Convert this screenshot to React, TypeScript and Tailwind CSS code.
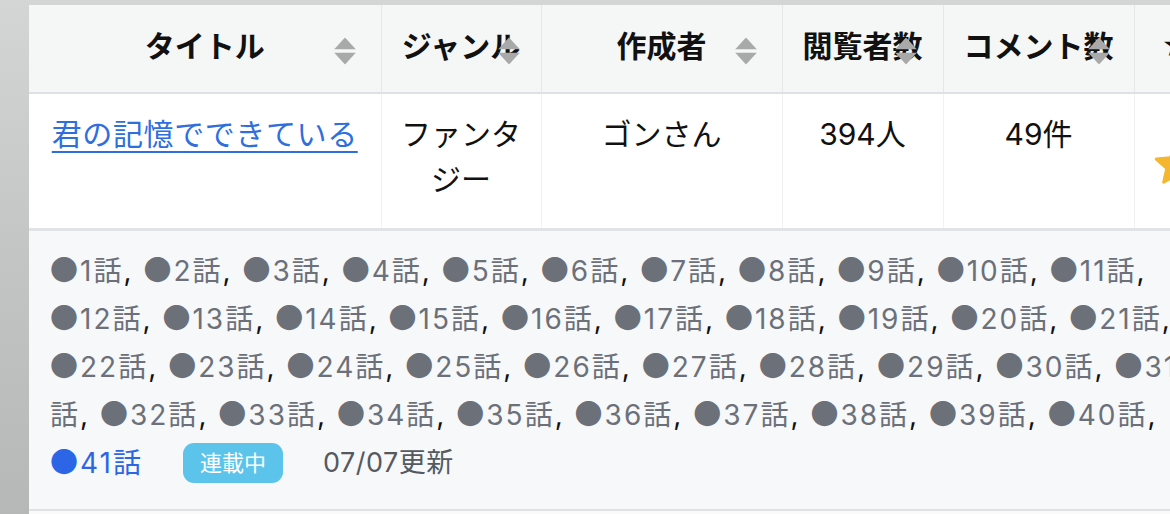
import React from 'react';

const episodes = Array.from({ length: 40 }, (_, i) => i + 1);

function SortIcon({ className }: { className: string }) {
  return (
    <span className={`absolute top-1/2 mt-[2px] -translate-y-1/2 flex flex-col gap-[3px] ${className}`}>
      <svg width="22" height="12" viewBox="0 0 22 12">
        <polygon points="11,0 22,12 0,12" fill="#a9a9a9" />
      </svg>
      <svg width="22" height="12" viewBox="0 0 22 12">
        <polygon points="0,0 22,0 11,12" fill="#a9a9a9" />
      </svg>
    </span>
  );
}

function Star() {
  return (
    <svg width="46" height="44" viewBox="0 0 24 23" className="inline-block">
      <polygon
        points="12,1.5 15,8.3 22.3,8.9 16.8,13.8 18.4,21 12,17.2 5.6,21 7.2,13.8 1.7,8.9 9,8.3"
        fill="#f5b630"
        stroke="#f5b630"
        strokeWidth="1.6"
        strokeLinejoin="round"
      />
    </svg>
  );
}

export default function App() {
  return (
    <div className="w-[1170px] h-[514px] overflow-hidden bg-gradient-to-b from-[#d4d6d5] via-[#c3c5c5] to-[#b6b8b8] pl-[29px] pt-[5px] font-[Inter,Noto_Sans_CJK_JP,sans-serif]">
      <table className="w-[1189px] table-fixed border-collapse text-[30px] leading-[45px] text-[#111]">
        <colgroup>
          <col className="w-[352px]" />
          <col className="w-[160px]" />
          <col className="w-[241px]" />
          <col className="w-[161px]" />
          <col className="w-[191px]" />
          <col className="w-[84px]" />
        </colgroup>
        <thead>
          <tr className="bg-[#f5f6f6] border-b-2 border-[#dfe0e3]">
            <th className="relative pt-[19px] pb-[23px] text-center font-bold border-r border-[#e6e7e8]">
              タイトル
              <SortIcon className="right-[25px]" />
            </th>
            <th className="relative pt-[19px] pb-[23px] text-center font-bold border-r border-[#e6e7e8] whitespace-nowrap">
              ジャンル
              <SortIcon className="right-[21px]" />
            </th>
            <th className="relative pt-[19px] pb-[23px] text-center font-bold border-r border-[#e6e7e8]">
              作成者
              <SortIcon className="right-[25px]" />
            </th>
            <th className="relative pt-[19px] pb-[23px] text-center font-bold border-r border-[#e6e7e8] whitespace-nowrap">
              閲覧者数
              <SortIcon className="right-[26px]" />
            </th>
            <th className="relative pt-[19px] pb-[23px] text-center font-bold border-r border-[#e6e7e8] whitespace-nowrap">
              コメント数
              <SortIcon className="right-[24px]" />
            </th>
            <th className="pt-[19px] pb-[23px] text-center font-bold text-[28px]">★</th>
          </tr>
        </thead>
        <tbody>
          <tr className="bg-white border-b-[3px] border-[#e2e3e7]">
            <td className="px-[10px] pt-[18px] pb-[26px] text-center align-top border-r border-[#f1f1f2] tracking-[0.6px]">
              <a href="#" className="text-[#2f6ede] underline underline-offset-[6px] decoration-2">
                君の記憶でできている
              </a>
            </td>
            <td className="px-[14px] pt-[18px] pb-[26px] text-center align-top border-r border-[#f1f1f2]">ファンタジー</td>
            <td className="px-[10px] pt-[18px] pb-[26px] text-center align-top border-r border-[#f1f1f2]">ゴンさん</td>
            <td className="px-[10px] pt-[18px] pb-[26px] text-center align-top border-r border-[#f1f1f2]">394人</td>
            <td className="px-[10px] pt-[18px] pb-[26px] text-center align-top border-r border-[#f1f1f2]">49件</td>
            <td className="text-center align-middle pt-[4px]">
              <Star />
            </td>
          </tr>
          <tr className="bg-[#f7f8f9] border-b-2 border-[#e0e1e4]">
            <td colSpan={6} className="pl-[21px] pr-[14px] pt-[16px] pb-[22px] text-[28px] leading-[48px] tracking-[2px]">
              <p>
                {episodes.map((n) => (
                  <React.Fragment key={n}>
                    <span className="text-[#6b7079]">
                      <span className="font-[Noto_Sans_CJK_JP,sans-serif] leading-none">●</span>
                      {n}話
                    </span>
                    <span className="text-[#111]">, </span>
                  </React.Fragment>
                ))}
              </p>
              <div className="flex items-center h-[48px]">
                <span className="text-[#2c66e6]">
                  <span className="font-[Noto_Sans_CJK_JP,sans-serif] leading-none">●</span>41話
                </span>
                <span className="ml-[40px] h-[40px] px-[17px] rounded-[11px] bg-[#5cc4ea] text-white text-[22px] leading-[40px] tracking-normal">
                  連載中
                </span>
                <span className="ml-[40px] text-[27px] text-[#555a60] tracking-[0.5px]">07/07更新</span>
              </div>
            </td>
          </tr>
          <tr className="bg-[#fafafa]">
            <td colSpan={6} className="h-[60px]"></td>
          </tr>
        </tbody>
      </table>
    </div>
  );
}
